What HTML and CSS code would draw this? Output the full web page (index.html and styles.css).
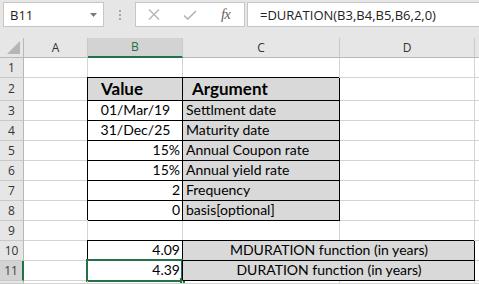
FILE: index.html
```html
<!DOCTYPE html>
<html>
<head>
<meta charset="utf-8">
<link rel="stylesheet" href="styles.css">
</head>
<body>
<div class="toolbar">
  <div class="namebox">
    <span class="name">B11</span>
    <svg class="dd" width="7" height="4" viewBox="0 0 7 4"><path d="M0 0h7L3.5 4z" fill="#7a7a7a"/></svg>
  </div>
  <div class="grip"><i></i><i></i><i></i></div>
  <div class="fxbox">
    <svg class="ico" width="12" height="11" viewBox="0 0 12 11"><path d="M1 0.5L11 10.5M11 0.5L1 10.5" stroke="#b3b3b3" stroke-width="1.2" fill="none"/></svg>
    <svg class="ico chk" width="14" height="10" viewBox="0 0 14 10"><path d="M1 5.5L4.8 9L13 1" stroke="#b3b3b3" stroke-width="1.6" fill="none"/></svg>
    <span class="fx">fx</span>
  </div>
  <div class="formula">=DURATION(B3,B4,B5,B6,2,0)</div>
</div>
<div class="sheet">
  <div class="c h corner"><svg width="13" height="13" viewBox="0 0 13 13"><path d="M13 0V13H0z" fill="#b5b5b5"/></svg></div>
  <div class="c h ch">A</div>
  <div class="c h ch hsel">B</div>
  <div class="c h ch">C</div>
  <div class="c h ch">D</div>
  <div class="c h ch last"></div>

  <div class="c h rh">1</div><div class="c"></div><div class="c"></div><div class="c"></div><div class="c"></div><div class="c"></div>

  <div class="c h rh">2</div><div class="c"></div>
  <div class="c tb g head valh">Value</div>
  <div class="c tb g head argh">Argument</div>
  <div class="c"></div><div class="c"></div>

  <div class="c h rh">3</div><div class="c"></div>
  <div class="c tb ctr">01/Mar/19</div><div class="c tb g">Settlment date</div>
  <div class="c"></div><div class="c"></div>

  <div class="c h rh">4</div><div class="c"></div>
  <div class="c tb ctr">31/Dec/25</div><div class="c tb g">Maturity date</div>
  <div class="c"></div><div class="c"></div>

  <div class="c h rh">5</div><div class="c"></div>
  <div class="c tb r">15%</div><div class="c tb g">Annual Coupon rate</div>
  <div class="c"></div><div class="c"></div>

  <div class="c h rh">6</div><div class="c"></div>
  <div class="c tb r">15%</div><div class="c tb g">Annual yield rate</div>
  <div class="c"></div><div class="c"></div>

  <div class="c h rh">7</div><div class="c"></div>
  <div class="c tb r">2</div><div class="c tb g">Frequency</div>
  <div class="c"></div><div class="c"></div>

  <div class="c h rh">8</div><div class="c"></div>
  <div class="c tb r">0</div><div class="c tb g">basis[optional]</div>
  <div class="c"></div><div class="c"></div>

  <div class="c h rh">9</div><div class="c"></div><div class="c"></div><div class="c"></div><div class="c"></div><div class="c"></div>

  <div class="c h rh">10</div><div class="c"></div>
  <div class="c tb r">4.09</div><div class="c tb g ctr span2">MDURATION function (in years)</div>
  <div class="c"></div>

  <div class="c h rh rsel">11</div><div class="c"></div>
  <div class="c tb r active">4.39<span class="sel"></span><span class="handle"></span></div><div class="c tb g ctr span2">DURATION function (in years)</div>
  <div class="c"></div>

  <div class="c h rh"></div><div class="c"></div><div class="c"></div><div class="c"></div><div class="c"></div><div class="c"></div>
</div>
</body>
</html>
```

FILE: styles.css
```css
html, body {
  margin: 0;
  padding: 0;
  background: #ffffff;
  overflow: hidden;
}
body {
  width: 479px;
  height: 284px;
  font-family: "Lato", "Liberation Sans", sans-serif;
}
.toolbar {
  height: 38px;
  background: #e6e6e6;
  display: flex;
  align-items: flex-start;
  padding-top: 2px;
  box-sizing: border-box;
}
.namebox {
  margin-left: 3px;
  width: 101px;
  height: 25px;
  box-sizing: border-box;
  background: #fff;
  border: 1px solid #c6c6c6;
  display: flex;
  align-items: center;
  justify-content: space-between;
  padding: 0 6px 0 6px;
  font-family: "Open Sans", sans-serif;
  font-size: 13px;
  color: #222;
}
.namebox .dd { margin-top: 1px; }
.grip {
  width: 31px;
  height: 25px;
  display: flex;
  flex-direction: column;
  align-items: center;
  justify-content: center;
  gap: 2px;
}
.grip i {
  display: block;
  width: 2px;
  height: 2px;
  background: #a8a8a8;
}
.fxbox {
  width: 110px;
  height: 25px;
  box-sizing: border-box;
  background: #fff;
  border: 1px solid #c6c6c6;
  display: flex;
  align-items: center;
  padding-left: 12px;
}
.fxbox .chk { margin-left: 23px; }
.fx {
  margin-left: 24px;
  font-family: "Liberation Serif", serif;
  font-style: italic;
  font-size: 15px;
  color: #666;
  letter-spacing: -1px;
}
.formula {
  margin-left: 2px;
  flex: 1;
  height: 25px;
  box-sizing: border-box;
  background: #fff;
  border: 1px solid #c6c6c6;
  border-right: none;
  font-family: "Open Sans", sans-serif;
  font-size: 13px;
  color: #222;
  padding-left: 12px;
  display: flex;
  align-items: center;
}
.sheet {
  display: grid;
  grid-template-columns: 24px 64px 95px 157px 135px 1fr;
  grid-template-rows: 20px 20px 23px repeat(9, 20px) 1fr;
  height: 246px;
  font-size: 14px;
  color: #000;
}
.c {
  box-sizing: border-box;
  border-right: 1px solid #d4d4d4;
  border-bottom: 1px solid #d4d4d4;
  display: flex;
  align-items: flex-end;
  padding: 0 2px 2px 3px;
  white-space: nowrap;
  line-height: 16px;
  position: relative;
}
.h {
  background: #e6e6e6;
  font-family: "Open Sans", sans-serif;
  font-size: 12px;
  color: #333;
  border-right-color: #c9c9c9;
  border-bottom-color: #c9c9c9;
}
.ch {
  justify-content: center;
  align-items: center;
  padding: 0;
  border-bottom-color: #b8b8b8;
}
.corner {
  padding: 0 3px 3px 0;
  justify-content: flex-end;
  align-items: flex-end;
  border-bottom-color: #b8b8b8;
  border-right-color: #b8b8b8;
}
.last { border-right: none; }
.hsel {
  background: #d3d3d3;
  color: #217346;
  border-bottom: 2px solid #217346;
}
.rh {
  justify-content: center;
  align-items: center;
  padding: 0;
  border-right-color: #b8b8b8;
}
.rsel {
  background: #d3d3d3;
  border-right: 2px solid #217346;
  color: #3c3c3c;
}
.tb {
  border-right-color: #000;
  border-bottom-color: #000;
  box-shadow: -1px -1px 0 0 #000;
}
.g { background: #d9d9d9; }
.ctr { justify-content: center; }
.r { justify-content: flex-end; }
.span2 { grid-column: span 2; }
.head {
  font-weight: bold;
  font-size: 17px;
  align-items: center;
  padding-bottom: 0;
}
.valh { padding-left: 13px; }
.argh { padding-left: 9px; }
.sel {
  position: absolute;
  left: -2px;
  top: -2px;
  right: -1px;
  bottom: -2px;
  border: 2px solid #217346;
  pointer-events: none;
}
.handle {
  position: absolute;
  right: -3px;
  bottom: -3px;
  width: 5px;
  height: 5px;
  background: #217346;
}
```
